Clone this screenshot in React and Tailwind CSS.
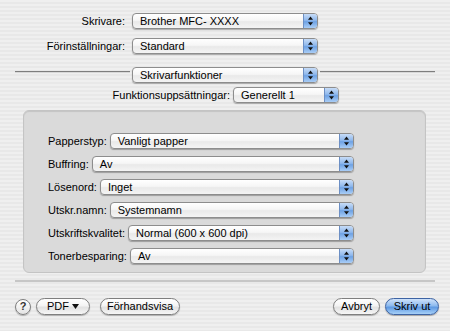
import React from "react";

function Arrows() {
  return (
    <svg width="7" height="10" viewBox="0 0 7 10">
      <path d="M3.5 0.5 L6 3.8 L1 3.8 Z" fill="#111" />
      <path d="M3.5 9.5 L6 6.2 L1 6.2 Z" fill="#111" />
    </svg>
  );
}

function Popup({ value, className }) {
  return (
    <div
      className={`flex h-[16px] items-stretch rounded-[4px] border border-[#8d8d8d] bg-[linear-gradient(to_bottom,#ffffff_0%,#f6f6f6_45%,#e9e9e9_55%,#f4f4f4_100%)] shadow-[0_1px_1px_rgba(0,0,0,0.28)] ${className}`}
    >
      <span className="flex flex-1 items-center overflow-hidden whitespace-nowrap pl-[7px] text-[11px] leading-none text-black">
        {value}
      </span>
      <span className="flex w-[14px] items-center justify-center rounded-r-[3px] border-l border-[#6c8fc4] bg-[linear-gradient(to_bottom,#c7dcf7_0%,#8fb8ec_45%,#6ea2e4_55%,#a9cdf6_100%)]">
        <Arrows />
      </span>
    </div>
  );
}

function Row({ label, value }) {
  return (
    <div className="flex h-[16px] items-center gap-[3px]">
      <span className="whitespace-nowrap text-[11px] leading-none text-black">{label}</span>
      <Popup value={value} className="flex-1" />
    </div>
  );
}

function Btn({ children, className }) {
  return (
    <div
      className={`flex h-[17px] items-center justify-center rounded-full border border-[#7f7f7f] bg-[linear-gradient(to_bottom,#ffffff_0%,#f4f4f4_45%,#e2e2e2_55%,#f6f6f6_100%)] text-[11px] leading-none text-black shadow-[0_1px_1px_rgba(0,0,0,0.25)] ${className}`}
    >
      {children}
    </div>
  );
}

export default function App() {
  return (
    <div
      className="flex h-[331px] w-[450px] flex-col bg-[repeating-linear-gradient(to_bottom,#efefef_0px,#efefef_2px,#e8e8e8_2px,#e8e8e8_4px)] pt-[13px]"
      style={{ fontFamily: '"Liberation Sans", Arial, sans-serif' }}
    >
      <div className="flex h-[16px] items-center">
        <span className="w-[125px] text-right text-[11px] leading-none text-black">Skrivare:</span>
        <Popup value="Brother MFC- XXXX" className="ml-[7px] w-[186px]" />
      </div>
      <div className="mt-[9px] flex h-[16px] items-center">
        <span className="w-[125px] text-right text-[11px] leading-none text-black">Förinställningar:</span>
        <Popup value="Standard" className="ml-[7px] w-[186px]" />
      </div>
      <div className="mt-[13px] flex h-[16px] items-start">
        <div className="ml-[15px] mt-[4px] h-[2px] w-[115px] border-t border-[#7e7e7e] bg-[#d8d8d8]" />
        <Popup value="Skrivarfunktioner" className="ml-[2px] w-[186px]" />
        <div className="ml-[2px] mt-[4px] h-[2px] w-[115px] border-t border-[#7e7e7e] bg-[#d8d8d8]" />
      </div>
      <div className="mt-[4px] flex h-[16px] items-center">
        <span className="w-[230px] text-right text-[11px] leading-none text-black">Funktionsuppsättningar:</span>
        <Popup value="Generellt 1" className="ml-[3px] w-[106px]" />
      </div>

      <div className="ml-[23px] mt-[7px] flex h-[163px] w-[403px] flex-col gap-[7px] rounded-[6px] border border-[#c4c4c4] bg-[#dadada] pl-[24px] pr-[71px] pt-[22px] shadow-[inset_0_1px_1px_rgba(0,0,0,0.1)]">
        <Row label="Papperstyp:" value="Vanligt papper" />
        <Row label="Buffring:" value="Av" />
        <Row label="Lösenord:" value="Inget" />
        <Row label="Utskr.namn:" value="Systemnamn" />
        <Row label="Utskriftskvalitet:" value="Normal (600 x 600 dpi)" />
        <Row label="Tonerbesparing:" value="Av" />
      </div>

      <div className="ml-[15px] mt-[7px] h-[2px] w-[420px] bg-[#c6c6c6]" />

      <div className="mt-[16px] flex h-[17px] items-center pl-[15px] pr-[11px]">
        <div className="flex h-[16px] w-[16px] items-center justify-center rounded-full border border-[#7f7f7f] bg-[linear-gradient(to_bottom,#ffffff,#e4e4e4)] text-[11px] font-bold leading-none text-[#333] shadow-[0_1px_1px_rgba(0,0,0,0.25)]">
          ?
        </div>
        <Btn className="ml-[5px] w-[54px] gap-[3px]">
          <span>PDF</span>
          <svg width="7" height="5" viewBox="0 0 7 5">
            <path d="M0 0 L7 0 L3.5 5 Z" fill="#111" />
          </svg>
        </Btn>
        <Btn className="ml-[10px] w-[80px]">Förhandsvisa</Btn>
        <div className="flex-1" />
        <Btn className="w-[47px]">Avbryt</Btn>
        <div className="ml-[5px] flex h-[17px] w-[54px] items-center justify-center rounded-full border border-[#3d63a3] bg-[linear-gradient(to_bottom,#cfe2fa_0%,#8ebbef_45%,#5f9ae3_55%,#a6d0f8_100%)] text-[11px] leading-none text-black shadow-[0_1px_1px_rgba(0,0,0,0.3)]">
          Skriv ut
        </div>
      </div>
    </div>
  );
}
